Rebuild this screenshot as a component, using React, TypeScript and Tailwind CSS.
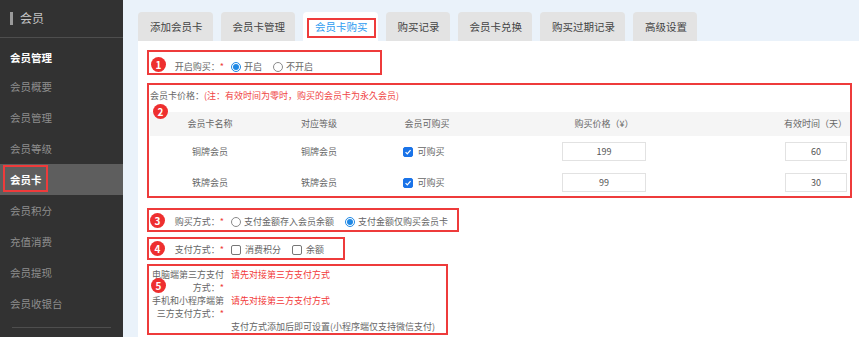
import React from 'react';

const menu = ['会员概要', '会员管理', '会员等级', '会员卡', '会员积分', '充值消费', '会员提现', '会员收银台'];
const tabs = ['添加会员卡', '会员卡管理', '会员卡购买', '购买记录', '会员卡兑换', '购买过期记录', '高级设置'];
const cards = [
  { name: '铜牌会员', level: '铜牌会员', price: '199', days: '60' },
  { name: '铁牌会员', level: '铁牌会员', price: '99', days: '30' },
];

const Badge: React.FC<{ n: number; className: string }> = ({ n, className }) => (
  <span
    className={`absolute flex h-[15px] w-[15px] items-center justify-center rounded-full bg-[#ee2f2f] text-[10px] font-bold leading-none text-white ${className}`}
  >
    {n}
  </span>
);

const Radio: React.FC<{ on?: boolean; label: string }> = ({ on, label }) => (
  <span className="mr-[11px] flex items-center">
    <span
      className={`mr-[3px] flex h-[10px] w-[10px] items-center justify-center rounded-full border ${
        on ? 'border-[#1e88e5]' : 'border-[#8a8a8a]'
      } bg-white`}
    >
      {on && <span className="h-[6px] w-[6px] rounded-full bg-[#1e88e5]" />}
    </span>
    {label}
  </span>
);

const Check: React.FC<{ on?: boolean; label: string }> = ({ on, label }) => (
  <span className="mr-[11px] flex items-center">
    <span
      className={`mr-[4px] flex h-[10px] w-[10px] items-center justify-center rounded-[2px] border ${
        on ? 'border-[#1a73e8] bg-[#1a73e8]' : 'border-[#777] bg-white'
      }`}
    >
      {on && (
        <svg viewBox="0 0 10 10" className="h-[8px] w-[8px]">
          <path d="M2 5.2 4.1 7.3 8.2 2.6" fill="none" stroke="white" strokeWidth="1.6" />
        </svg>
      )}
    </span>
    {label}
  </span>
);

const Label: React.FC<{ children: React.ReactNode; first?: string }> = ({ children, first }) => (
  <span className="w-[76px] shrink-0 pr-[1px] text-right">
    {first && <span className="block">{first}</span>}
    <span className="block">
      {children}
      <span className="text-[#ee3b3b]">*</span>
    </span>
  </span>
);

const App: React.FC = () => {
  return (
    <div className="flex h-[337px] w-[859px] overflow-hidden font-[family-name:'Noto_Sans_CJK_SC',sans-serif]">
      {/* Sidebar */}
      <div className="w-[123px] shrink-0 bg-[#323232]">
        <div className="flex h-[38px] items-center border-b border-[#4e4e4e] pb-[1px] pl-[10px]">
          <span className="mr-[7px] h-[13px] w-[3px] bg-[#9a9a9a]" />
          <span className="text-[12px] text-[#c4c4c4]">会员</span>
        </div>
        <div className="h-[33px] pl-[10px] pt-[13px] text-[10.5px] font-bold leading-[13px] text-white">会员管理</div>
        {menu.map((m) => (
          <div
            key={m}
            className={`relative flex h-[31px] items-center pl-[10px] text-[10.5px] ${
              m === '会员卡' ? 'bg-[#5e5e5e] font-bold text-white' : 'text-[#8e8e8e]'
            }`}
          >
            {m}
            {m === '会员卡' && (
              <span className="absolute left-[3px] top-[1px] h-[27px] w-[45px] border-2 border-[#ee3b3b]" />
            )}
          </div>
        ))}
        <div className="mx-[12px] mt-[8px] border-t border-[#4e4e4e]" />
      </div>

      {/* Main */}
      <div className="flex flex-1 flex-col bg-[#eaf2fa] pl-[15px] pt-[12px]">
        <div className="flex gap-2">
          {tabs.map((t) => (
            <div
              key={t}
              className={`relative flex h-[29px] items-center rounded-t-[4px] pl-[12px] pr-[10px] text-[10.5px] ${
                t === '会员卡购买' ? 'bg-white text-[#2d9cf0]' : 'bg-[#e3e3e3] text-[#444]'
              }`}
            >
              {t}
              {t === '会员卡购买' && (
                <span className="absolute bottom-[3px] left-[4px] right-[2px] top-[6px] border-2 border-[#ee3b3b]" />
              )}
            </div>
          ))}
        </div>

        <div className="flex-1 bg-white pl-[9px] pt-[9px] text-[9px] text-[#666]">
          {/* 1 */}
          <div className="relative h-[25px] w-[235px] border-2 border-[#ee3b3b] pt-[8px]">
            <Badge n={1} className="left-[2px] top-[5px]" />
            <div className="flex h-[13px] items-center leading-[13px]">
              <Label>开启购买：</Label>
              <span className="ml-[6px] flex items-center">
                <Radio on label="开启" />
                <Radio label="不开启" />
              </span>
            </div>
          </div>

          {/* 2 */}
          <div className="relative mt-[8px] h-[115px] w-[705px] border-2 border-[#ee3b3b] pl-[1px] pt-[4px]">
            <Badge n={2} className="left-[4px] top-[19px]" />
            <div className="h-[13px] leading-[13px]">
              会员卡价格：<span className="text-[#f04545]">(注：有效时间为零时，购买的会员卡为永久会员)</span>
            </div>
            <div className="mt-[10px] grid h-[24px] grid-cols-[120px_98px_118px_236px_1fr] items-center bg-[#f5f5f5]">
              <span className="text-center">会员卡名称</span>
              <span className="text-center">对应等级</span>
              <span className="text-center">会员可购买</span>
              <span className="text-center">购买价格（¥）</span>
              <span className="pr-[3px] text-right">有效时间（天）</span>
            </div>
            {cards.map((c) => (
              <div key={c.name} className="grid h-[31px] grid-cols-[120px_98px_118px_236px_1fr] items-center">
                <span className="text-center">{c.name}</span>
                <span className="text-center">{c.level}</span>
                <span className="flex justify-center pl-[5px]">
                  <Check on label="可购买" />
                </span>
                <span className="flex justify-center">
                  <span className="flex h-[19px] w-[84px] items-center justify-center border border-[#e2e2e2] text-[#555]">
                    {c.price}
                  </span>
                </span>
                <span className="flex justify-end pr-[3px]">
                  <span className="flex h-[19px] w-[62px] items-center justify-center border border-[#e2e2e2] text-[#555]">
                    {c.days}
                  </span>
                </span>
              </div>
            ))}
          </div>

          {/* 3 */}
          <div className="relative mt-[10px] h-[24px] w-[312px] overflow-hidden border-2 border-[#ee3b3b] pt-[5px]">
            <Badge n={3} className="left-[1px] top-[3px]" />
            <div className="flex h-[13px] items-center whitespace-nowrap leading-[13px]">
              <Label>购买方式：</Label>
              <span className="ml-[6px] flex items-center">
                <Radio label="支付金额存入会员余额" />
                <Radio on label="支付金额仅购买会员卡" />
              </span>
            </div>
          </div>

          {/* 4 */}
          <div className="relative mt-[5px] h-[23px] w-[198px] border-2 border-[#ee3b3b] pt-[4px]">
            <Badge n={4} className="left-[1px] top-[2px]" />
            <div className="flex h-[13px] items-center leading-[13px]">
              <Label>支付方式：</Label>
              <span className="ml-[6px] flex items-center">
                <Check label="消费积分" />
                <Check label="余额" />
              </span>
            </div>
          </div>

          {/* 5 */}
          <div className="relative mt-[4px] h-[71px] w-[301px] border-2 border-[#ee3b3b] pt-[2px] leading-[13px]">
            <Badge n={5} className="left-[2px] top-[12px]" />
            <div className="flex">
              <Label first="电脑端第三方支付">方式：</Label>
              <span className="ml-[6px] text-[#f23a3a]">请先对接第三方支付方式</span>
            </div>
            <div className="flex">
              <Label first="手机和小程序端第">三方支付方式：</Label>
              <span className="ml-[6px] text-[#f23a3a]">请先对接第三方支付方式</span>
            </div>
            <div className="pl-[82px]">支付方式添加后即可设置(小程序端仅支持微信支付)</div>
          </div>
        </div>
      </div>
    </div>
  );
};

export default App;
